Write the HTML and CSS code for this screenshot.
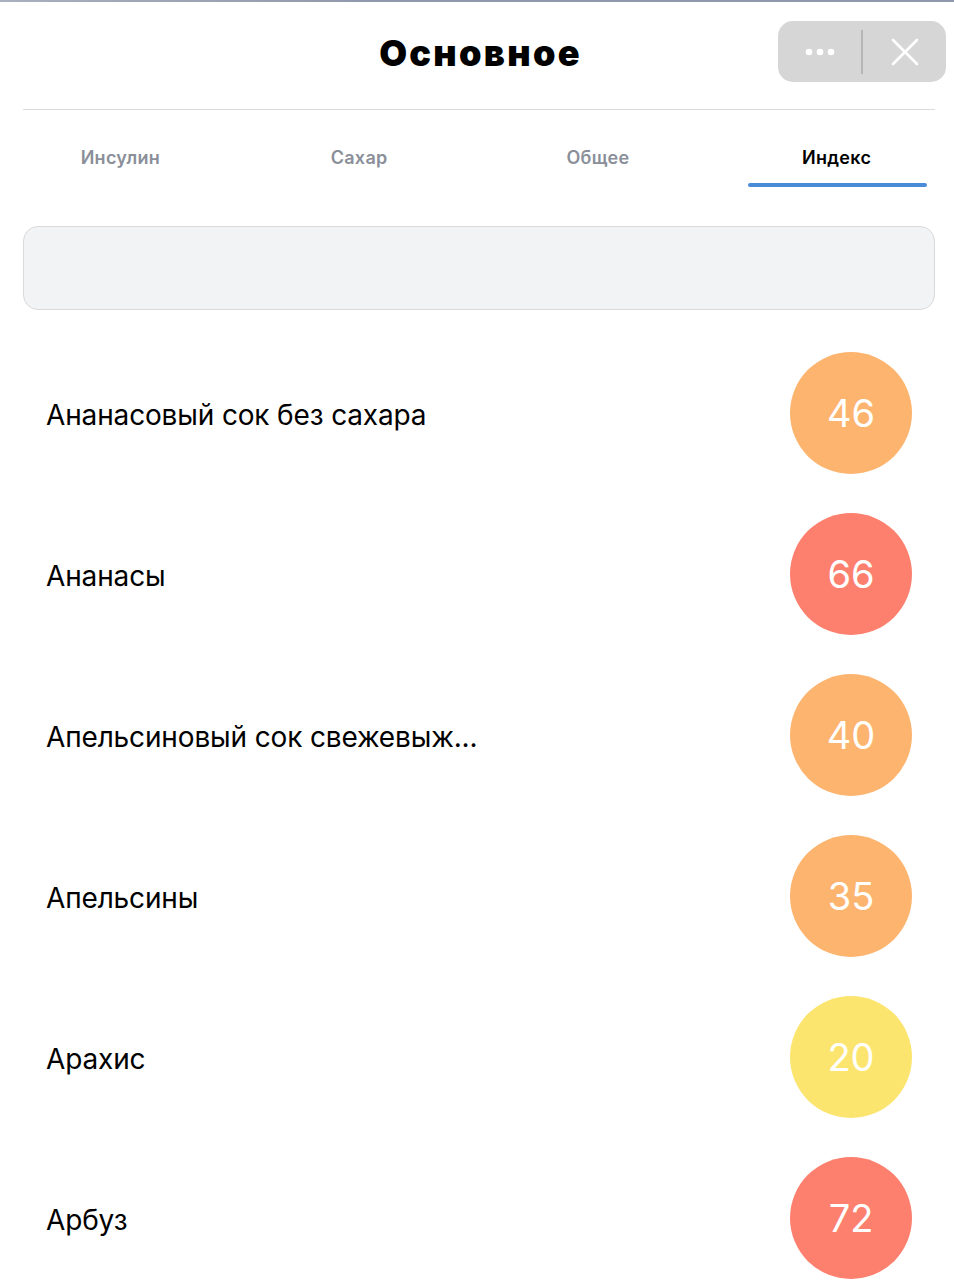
FILE: index.html
```html
<!DOCTYPE html>
<html lang="ru">
<head>
<meta charset="utf-8">
<title>Основное</title>
<link rel="stylesheet" href="styles.css">
</head>
<body>
<div class="topbar"></div>
<div class="page">
  <header class="header">
    <h1 class="title">Основное</h1>
    <div class="capsule">
      <button class="cap-btn" aria-label="Ещё">
        <svg width="32" height="8" viewBox="0 0 32 8"><circle cx="5" cy="4" r="3.3" fill="#fff"/><circle cx="16" cy="4" r="3.3" fill="#fff"/><circle cx="27" cy="4" r="3.3" fill="#fff"/></svg>
      </button>
      <span class="cap-div"></span>
      <button class="cap-btn" aria-label="Закрыть">
        <svg width="28" height="28" viewBox="0 0 28 28"><path d="M2 2 L26 26 M26 2 L2 26" stroke="#fff" stroke-width="2.6" stroke-linecap="round"/></svg>
      </button>
    </div>
  </header>
  <div class="sep"></div>
  <nav class="tabs">
    <div class="tab">Инсулин</div>
    <div class="tab">Сахар</div>
    <div class="tab">Общее</div>
    <div class="tab active">Индекс</div>
  </nav>
  <div class="search"></div>
  <ul class="list">
    <li class="row"><span class="name">Ананасовый сок без сахара</span><span class="badge orange">46</span></li>
    <li class="row"><span class="name">Ананасы</span><span class="badge red">66</span></li>
    <li class="row"><span class="name">Апельсиновый сок свежевыж...</span><span class="badge orange">40</span></li>
    <li class="row"><span class="name">Апельсины</span><span class="badge orange">35</span></li>
    <li class="row"><span class="name">Арахис</span><span class="badge yellow">20</span></li>
    <li class="row"><span class="name">Арбуз</span><span class="badge red">72</span></li>
  </ul>
</div>
</body>
</html>
```

FILE: styles.css
```css
html, body {
  margin: 0;
  padding: 0;
  background: #fff;
  overflow: hidden;
}
body {
  font-family: Inter, "Noto Sans", sans-serif;
  color: #000;
  width: 954px;
  height: 1280px;
}
.topbar {
  height: 2px;
  background: linear-gradient(to right, #a9b0bf 0, #8f98aa 40%, #8f98aa 100%);
}
.header {
  position: relative;
  height: 107px;
  display: flex;
  align-items: flex-start;
  justify-content: center;
}
.title {
  margin: 30px 0 0 0;
  padding-left: 7px;
  font-family: Inter, "Liberation Sans", sans-serif;
  font-weight: 900;
  font-size: 36px;
  line-height: 42px;
  letter-spacing: 2.3px;
}
.capsule {
  position: absolute;
  top: 19px;
  right: 8px;
  width: 168px;
  height: 61px;
  border-radius: 15px;
  background: #d6d6d6;
  display: flex;
  align-items: center;
}
.cap-btn {
  flex: 1;
  height: 100%;
  border: 0;
  background: transparent;
  padding: 0;
  display: flex;
  align-items: center;
  justify-content: center;
}
.cap-div {
  width: 2px;
  height: 44px;
  background: #b5b5b5;
}
.sep {
  height: 1px;
  background: #dcdcdc;
  margin: 0 19px 0 23px;
}
.tabs {
  display: grid;
  grid-template-columns: repeat(4, 1fr);
  margin: 0 -2px 0 1px;
  height: 80px;
}
.tab {
  font-size: 18px;
  font-weight: 600;
  letter-spacing: 0.3px;
  color: #8a8f99;
  text-align: center;
  padding-top: 37px;
  line-height: 22px;
  position: relative;
}
.tab.active {
  color: #000;
}
.tab.active::after {
  content: "";
  position: absolute;
  left: 31px;
  right: 29px;
  top: 73px;
  height: 4px;
  border-radius: 2px;
  background: #4a8bd9;
}
.search {
  margin: 36px 19px 0 23px;
  height: 82px;
  border: 1px solid #d9d9d9;
  border-radius: 15px;
  background: #f2f3f5;
}
.list {
  list-style: none;
  margin: 22px 0 0 0;
  padding: 0;
}
.row {
  height: 161px;
  display: flex;
  align-items: center;
  justify-content: space-between;
  padding: 0 42px 0 46px;
}
.name {
  font-size: 28px;
  font-weight: 400;
  letter-spacing: -0.15px;
  padding-top: 4px;
}
.badge {
  width: 122px;
  height: 122px;
  border-radius: 50%;
  display: flex;
  align-items: center;
  justify-content: center;
  color: #fff;
  font-size: 38px;
  font-weight: 400;
}
.orange { background: #fdb46f; }
.red { background: #fd806e; }
.yellow { background: #fbe56f; }
```
